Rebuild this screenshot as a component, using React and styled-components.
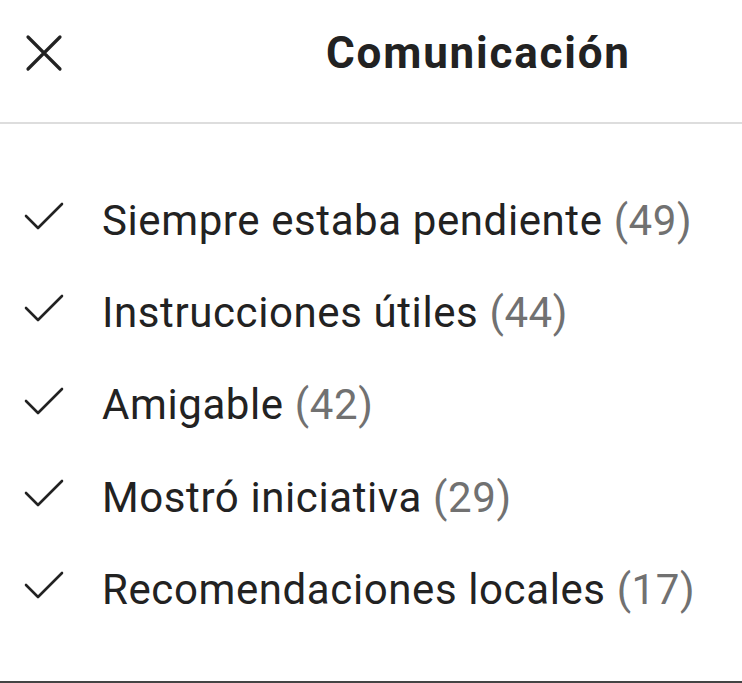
import React from 'react';
import styled, { createGlobalStyle } from 'styled-components';

const GlobalStyle = createGlobalStyle`
  html, body {
    margin: 0;
    padding: 0;
    background: #ffffff;
  }
  body {
    font-family: Roboto, "Liberation Sans", Arial, sans-serif;
    color: #222222;
  }
`;

const Sheet = styled.div`
  width: 742px;
  height: 683px;
  box-sizing: border-box;
  display: flex;
  flex-direction: column;
  background: #fff;
  border-bottom: 2px solid #444;
  overflow: hidden;
`;

const Header = styled.header`
  height: 124px;
  display: flex;
  align-items: center;
  padding: 0 0 0 25px;
  border-bottom: 2px solid #dddddd;
  box-sizing: border-box;
  flex-shrink: 0;
`;

const CloseButton = styled.button`
  padding: 0;
  border: 0;
  background: none;
  display: flex;
  align-items: center;
  justify-content: center;
  margin-top: -16px;
`;

const Title = styled.h1`
  margin: -16px 0 0 263px;
  font-size: 44px;
  font-weight: 700;
  letter-spacing: 1.8px;
  color: #222;
`;

const List = styled.ul`
  list-style: none;
  margin: 0;
  padding: 50px 0 0 24px;
`;

const Item = styled.li`
  height: 92.3px;
  display: flex;
  align-items: center;
  gap: 38px;
  font-size: 42px;
  letter-spacing: 0.6px;
  color: #222;
`;

const Check = styled.svg`
  flex-shrink: 0;
  margin-bottom: 8px;
`;

const Count = styled.span`
  color: #717171;
`;

function CloseIcon() {
  return (
    <svg width="38" height="38" viewBox="0 0 38 38" fill="none">
      <path d="M3 3 L35 35 M35 3 L3 35" stroke="#222" strokeWidth="3.2" strokeLinecap="round" />
    </svg>
  );
}

function CheckIcon() {
  return (
    <Check width="40" height="28" viewBox="0 0 40 28" fill="none">
      <path d="M2 14 L14 26 L38 2" stroke="#222" strokeWidth="2.6" strokeLinecap="round" strokeLinejoin="round" />
    </Check>
  );
}

const items = [
  { label: 'Siempre estaba pendiente', count: 49 },
  { label: 'Instrucciones útiles', count: 44 },
  { label: 'Amigable', count: 42 },
  { label: 'Mostró iniciativa', count: 29 },
  { label: 'Recomendaciones locales', count: 17 },
];

export default function App() {
  return (
    <>
      <GlobalStyle />
      <Sheet>
        <Header>
          <CloseButton aria-label="Cerrar">
            <CloseIcon />
          </CloseButton>
          <Title>Comunicación</Title>
        </Header>
        <List>
          {items.map((item) => (
            <Item key={item.label}>
              <CheckIcon />
              <span>
                {item.label} <Count>({item.count})</Count>
              </span>
            </Item>
          ))}
        </List>
      </Sheet>
    </>
  );
}
